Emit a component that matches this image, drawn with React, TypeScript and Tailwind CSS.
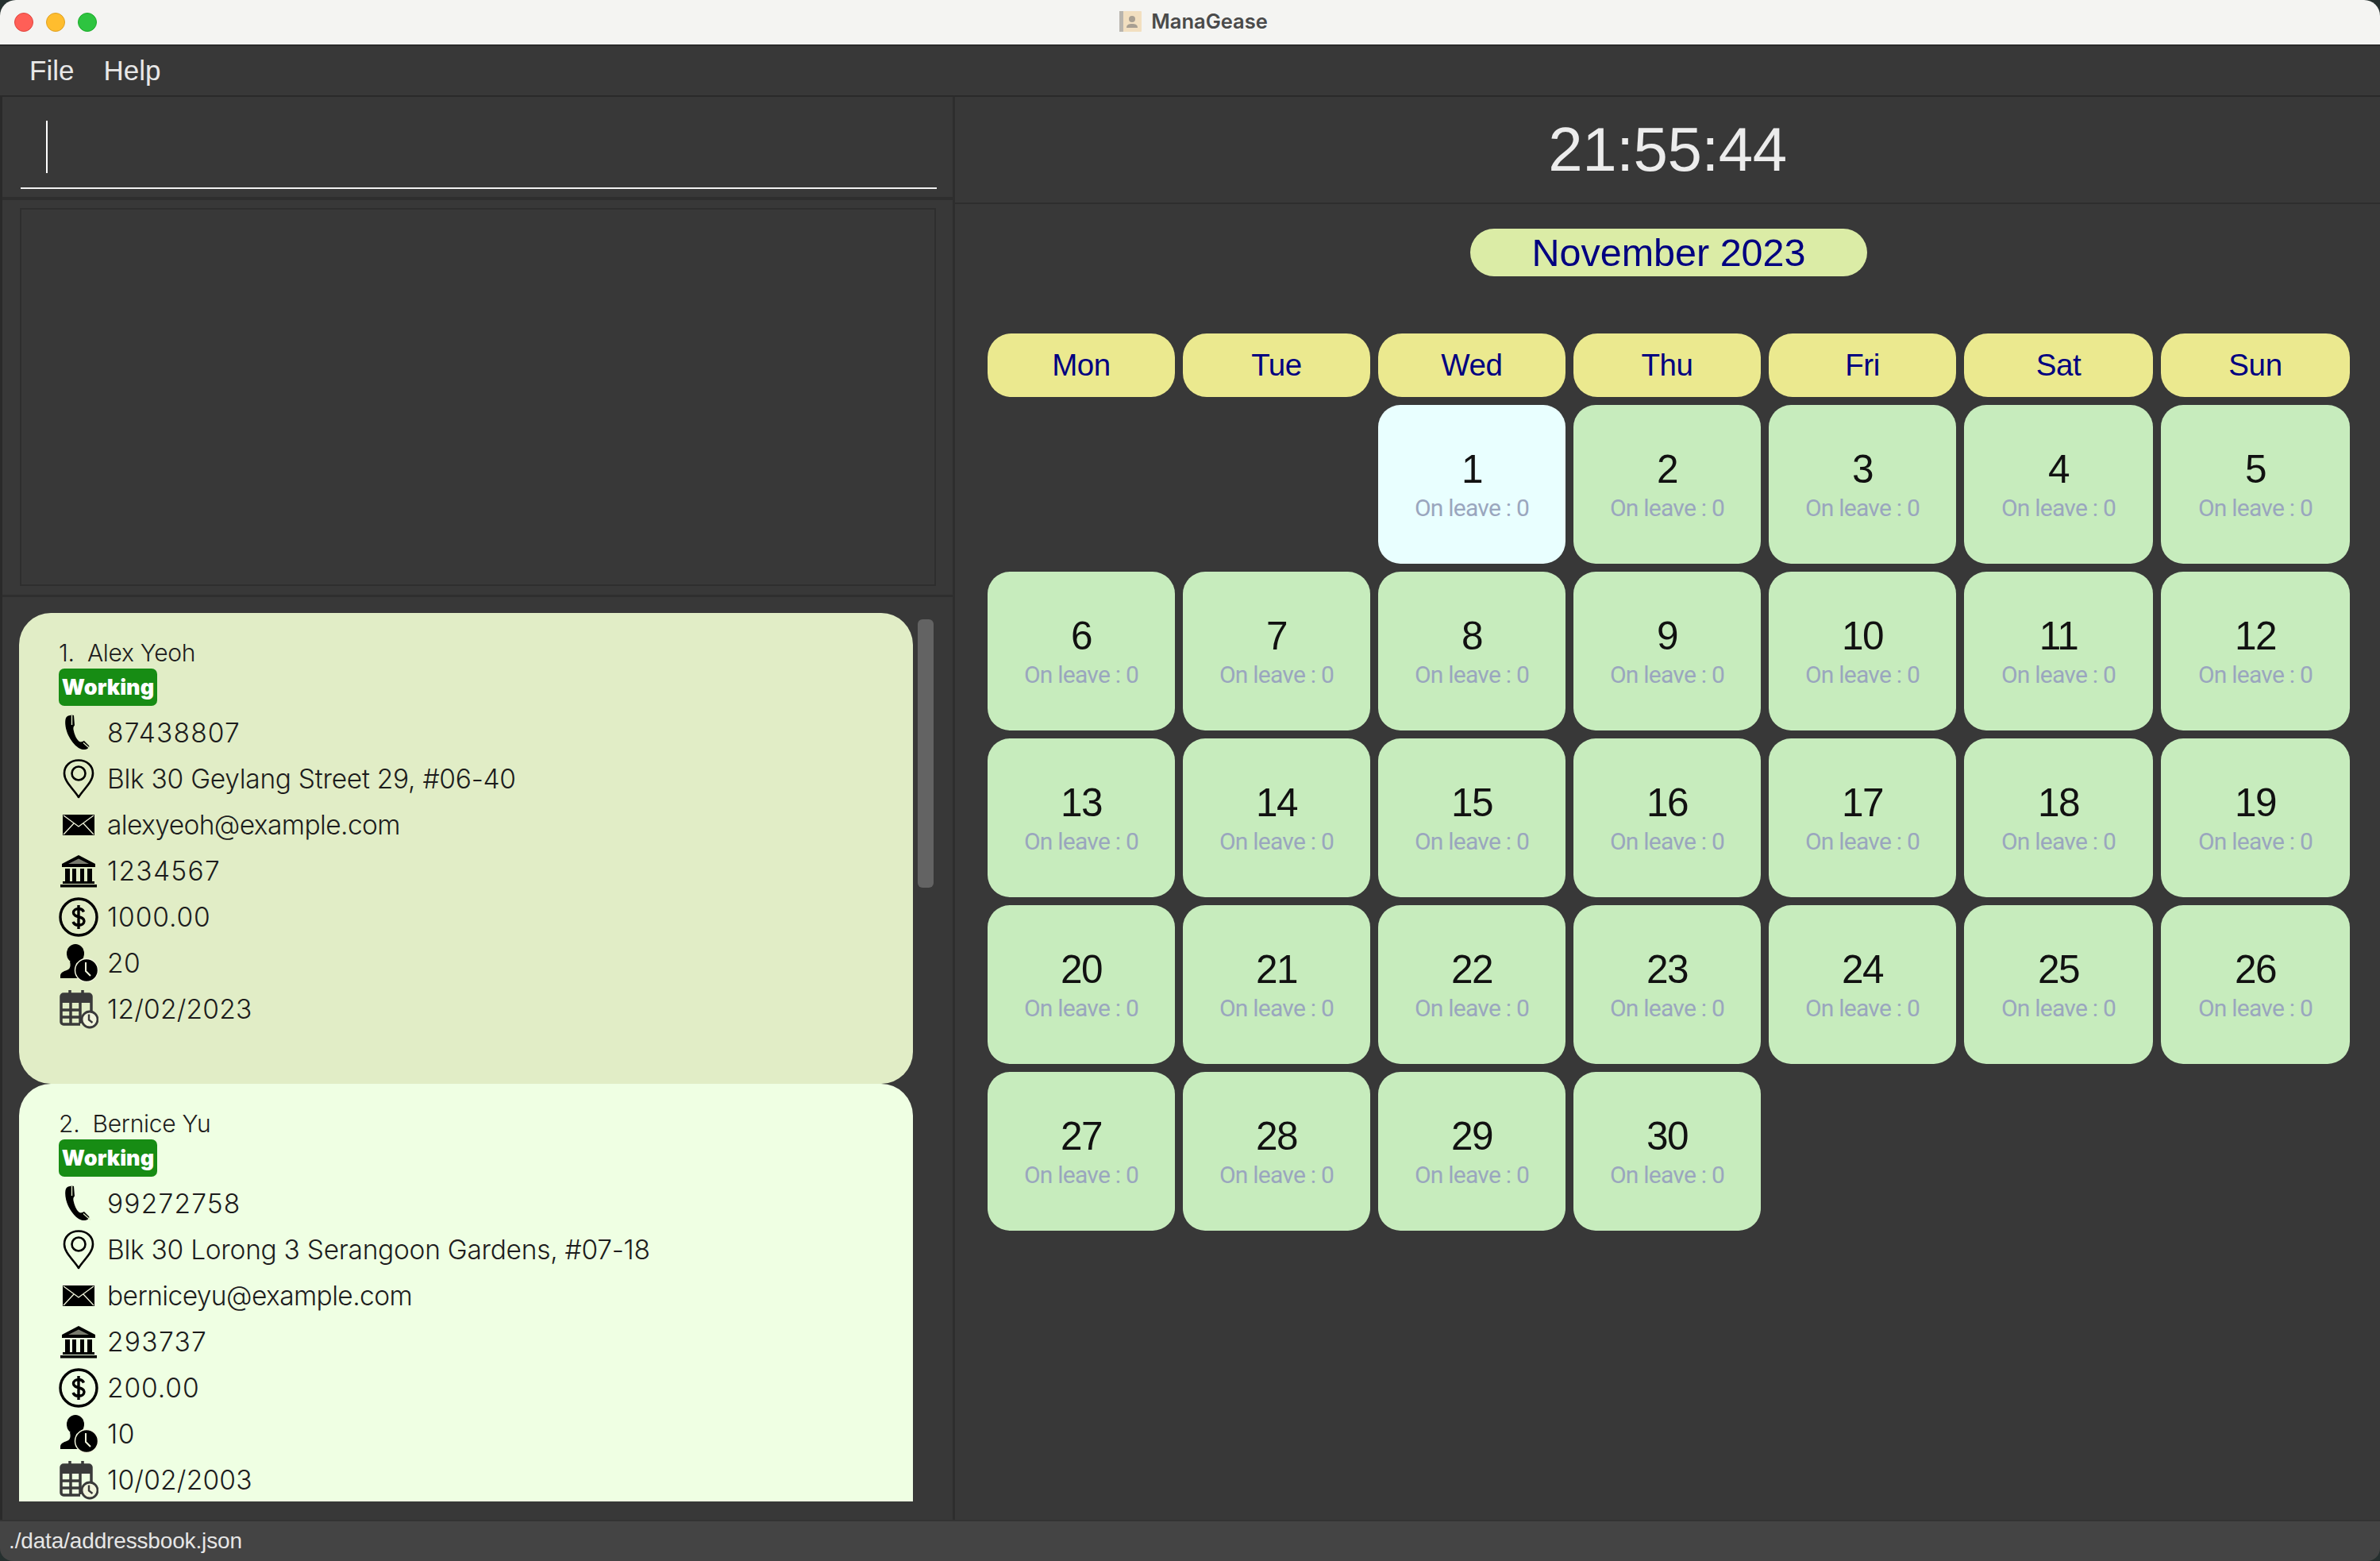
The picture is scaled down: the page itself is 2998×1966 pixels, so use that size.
const employees = [
  {
    id: 1,
    name: "Alex Yeoh",
    phone: "87438807",
    address: "Blk 30 Geylang Street 29, #06-40",
    email: "alexyeoh@example.com",
    bank: "1234567",
    salary: "1000.00",
    leave: "20",
    joined: "12/02/2023",
    color: "bg-[#e1edc6]",
  },
  {
    id: 2,
    name: "Bernice Yu",
    phone: "99272758",
    address: "Blk 30 Lorong 3 Serangoon Gardens, #07-18",
    email: "berniceyu@example.com",
    bank: "293737",
    salary: "200.00",
    leave: "10",
    joined: "10/02/2003",
    color: "bg-[#efffe3]",
  },
];

const weekDays = ["Mon", "Tue", "Wed", "Thu", "Fri", "Sat", "Sun"];
const monthDays = Array.from({ length: 30 }, (_, i) => i + 1);

const PhoneIcon = () => (
  <svg width="50" height="48" viewBox="0 0 50 48">
    <path
      d="M14 2c-3 .5-5 2-5.500 5-1 6 .5 13 3.500 20 3 6 7 12 13 16 3 2 8 3 11 1 2-1 3-3 2-4l-6-6c-2 1-4 2-6 1-3-2-6-8-7-13-1-3-1-6 1-7.500L19 2c-1-.5-3-.5-5 0z"
      fill="#000"
    />
    <path d="M16.500 2v12" stroke="#e1edc6" strokeWidth="1.400" />
    <path d="M31 36.500l9 8" stroke="#e1edc6" strokeWidth="1.400" />
  </svg>
);

const PinIcon = () => (
  <svg width="50" height="50" viewBox="0 0 50 50">
    <path
      d="M25 48 C19 38 7 29 7 18 C7 8 15 1.500 25 1.500 C35 1.500 43 8 43 18 C43 29 31 38 25 48 Z"
      fill="none"
      stroke="#000"
      strokeWidth="2.600"
      strokeLinejoin="round"
    />
    <circle cx="25" cy="18" r="8.500" fill="none" stroke="#000" strokeWidth="2.600" />
  </svg>
);

const MailIcon = () => (
  <svg width="50" height="28" viewBox="0 0 50 28">
    <rect x="5" y="1" width="40" height="26" fill="#000" />
    <path d="M6 2l19 14L44 2M6 26l13-14M44 26L31 12" fill="none" stroke="#f1f5dc" strokeWidth="1.300" />
  </svg>
);

const BankIcon = () => (
  <svg width="50" height="42" viewBox="0 0 50 42">
    <path d="M25 1L4 12v4h42v-4L25 1z" fill="#000" />
    <path d="M25 5.500L12 12h26L25 5.500z" fill="#f1f5dc" fillOpacity="0.500" />
    <path d="M8 18h6v16H8zM17 18h5v16h-5zM27 18h5v16h-5zM36 18h6v16h-6z" fill="#000" />
    <path d="M5 34h40v3H5zM2 38h46v3.500H2z" fill="#000" />
  </svg>
);

const DollarIcon = () => (
  <svg width="50" height="50" viewBox="0 0 50 50">
    <circle cx="25" cy="25" r="23" fill="none" stroke="#000" strokeWidth="3.400" />
    <path
      d="M31.500 18.500c-1-2.500-3.500-4-6.500-4-3.500 0-6.500 2-6.500 5 0 7 13.500 3.500 13.500 10.500 0 3.200-3 5.200-7 5.200-3.500 0-6-1.700-7-4.200M25 10v30"
      fill="none"
      stroke="#000"
      strokeWidth="3.400"
    />
  </svg>
);

const LeaveIcon = () => (
  <svg width="50" height="48" viewBox="0 0 50 48">
    <ellipse cx="21" cy="12" rx="11" ry="12" fill="#000" />
    <path d="M14 22c1 4 1 8-2 10-4 2-10 3-10 8v3h26v-10c-4-3-6-6-6-11z" fill="#000" />
    <circle cx="35" cy="33" r="14.500" fill="#000" stroke="#f1f5dc" strokeWidth="1.500" />
    <path d="M34 23v11l6 6" fill="none" stroke="#f1f5dc" strokeWidth="2" />
  </svg>
);

const JoinedIcon = () => (
  <svg width="50" height="50" viewBox="0 0 50 50">
    <path
      d="M3 9a3 3 0 0 1 3-3h32a3 3 0 0 1 3 3v23M27 44H6a3 3 0 0 1-3-3V9"
      fill="none"
      stroke="#3a3a3a"
      strokeWidth="3.500"
    />
    <path d="M3 7h38v10H3z" fill="#3a3a3a" />
    <path
      d="M14 1v8M30 1v8M3 26h24M3 35h24M15 17v26M27 17v26"
      fill="none"
      stroke="#3a3a3a"
      strokeWidth="3.500"
    />
    <circle cx="39" cy="38" r="10" fill="#f1f5dc" stroke="#3a3a3a" strokeWidth="2.800" />
    <path d="M38 31.500v7l4.500 3.500" fill="none" stroke="#3a3a3a" strokeWidth="2.400" />
  </svg>
);

const AddressBookIcon = () => (
  <svg width="28" height="26" viewBox="0 0 28 26">
    <rect x="0" y="0" width="28" height="26" rx="1" fill="#f2dfc0" />
    <rect x="0" y="0" width="5" height="26" fill="#b9b5ae" />
    <circle cx="16" cy="10" r="4" fill="#a89f92" />
    <path d="M9 21c0-4 3-5 7-5s7 1 7 5z" fill="#a89f92" />
  </svg>
);

const InfoRow = ({
  icon,
  text,
  tracking = "",
}: {
  icon: React.ReactNode;
  text: string;
  tracking?: string;
}) => (
  <div className="flex h-[58px] items-center">
    <div className="flex w-[50px] shrink-0 justify-center">{icon}</div>
    <span className={`mb-[1px] ml-[11px] whitespace-nowrap text-[33.500px] font-[350] leading-[40px] text-[#1c1c1c] ${tracking}`}>
      {text}
    </span>
  </div>
);

const EmployeeCard = ({ employee }: { employee: (typeof employees)[number] }) => (
  <div
    className={`flex h-[593px] w-[1126px] shrink-0 flex-col rounded-[40px] pl-[50px] pt-[30px] font-['Inter',sans-serif] ${employee.color}`}
  >
    <div className="flex h-[40px] items-center whitespace-pre text-[30px] font-[350] tracking-[-0.300px] text-[#1c1c1c]">
      {employee.id}.{"  "}
      {employee.name}
    </div>
    <div className="flex h-[47px] w-[124px] items-center justify-center rounded-[7px] bg-[#178c14] pt-[2px] text-[27px] font-black text-white">
      Working
    </div>
    <div className="mt-[5px] flex flex-col">
      <InfoRow icon={<PhoneIcon />} text={employee.phone} tracking="tracking-[1.200px]" />
      <InfoRow icon={<PinIcon />} text={employee.address} tracking="tracking-[-0.280px]" />
      <InfoRow icon={<MailIcon />} text={employee.email} tracking="tracking-[-0.600px]" />
      <InfoRow icon={<BankIcon />} text={employee.bank} tracking="tracking-[1.300px]" />
      <InfoRow icon={<DollarIcon />} text={employee.salary} tracking="tracking-[0.900px]" />
      <InfoRow icon={<LeaveIcon />} text={employee.leave} tracking="tracking-[0.500px]" />
      <InfoRow icon={<JoinedIcon />} text={employee.joined} tracking="tracking-[0.200px]" />
    </div>
  </div>
);

const DayCell = ({ day }: { day: number }) => (
  <div
    className={`flex h-[200px] flex-col items-center rounded-[28px] pt-[56px] ${
      day === 1 ? "bg-[#e9ffff]" : "bg-[#c7ecbd]"
    }`}
  >
    <span className="text-[49.500px] leading-[50px] tracking-[-1.500px] text-[#111]">{day}</span>
    <span className="mt-[9px] font-['Roboto',sans-serif] text-[30px] leading-[30px] tracking-[-0.750px] text-[#9aa6be]">
      On leave : 0
    </span>
  </div>
);

const App = () => {
  return (
    <div className="flex h-[1966px] w-[2998px] flex-col overflow-hidden bg-[#26302f] font-['Liberation_Sans',sans-serif]">
      <div className="flex h-[58px] shrink-0 items-center rounded-t-[20px] border-b-2 border-[#2a2a2a] bg-[#f4f4f2]">
        <div className="flex flex-1 gap-[16px] pl-[18px]">
          <div className="h-[24px] w-[24px] rounded-full border border-[#e0443e] bg-[#ff5f57]" />
          <div className="h-[24px] w-[24px] rounded-full border border-[#dea123] bg-[#ffbd2e]" />
          <div className="h-[24px] w-[24px] rounded-full border border-[#1aab29] bg-[#2ec440]" />
        </div>
        <div className="mb-[2px] mr-[9px] flex items-center gap-[12px]">
          <AddressBookIcon />
          <span className="font-['Inter',sans-serif] text-[25.500px] font-semibold text-[#4a4a4a]">ManaGease</span>
        </div>
        <div className="flex-1" />
      </div>

      <div className="flex h-[64px] shrink-0 items-center gap-[37px] border-b-2 border-[#2a2a2a] bg-[#383838] pl-[37px] text-[35px] text-[#e8e8e8]">
        <span>File</span>
        <span>Help</span>
      </div>

      <div className="flex min-h-0 flex-1 border-l-[3px] border-[#2a2a2a] bg-[#383838]">
        <div className="flex w-[1197px] shrink-0 flex-col">
          <div className="flex h-[126px] shrink-0 flex-col px-[23px] pt-[30px]">
            <div className="ml-[32px] h-[66px] w-[2px] bg-white" />
            <div className="mt-[18px] h-[2px] w-[1154px] bg-[#f2f2f2]" />
          </div>
          <div className="h-[4px] shrink-0 bg-[#2e2e2e]" />
          <div className="flex h-[497px] shrink-0 pb-[11px] pl-[22px] pr-[21px] pt-[10px]">
            <div className="w-full border-2 border-[#2e2e2e]" />
          </div>
          <div className="h-[3px] shrink-0 bg-[#2e2e2e]" />
          <div className="relative flex min-h-0 flex-1 pb-[23px] pl-[21px] pt-[20px]">
            <div className="flex min-h-0 flex-1 flex-col overflow-hidden">
              {employees.map((employee) => (
                <EmployeeCard key={employee.id} employee={employee} />
              ))}
            </div>
            <div className="absolute left-[1153px] top-[28px] h-[338px] w-[20px] rounded-[6px] bg-[#636363]" />
          </div>
        </div>

        <div className="flex min-w-0 flex-1 flex-col border-l-[3px] border-[#2e2e2e]">
          <div className="flex h-[135px] shrink-0 items-center justify-center border-b-2 border-[#2e2e2e] text-[78px] tracking-[-0.400px] text-[#ececec]">
            21:55:44
          </div>
          <div className="flex flex-col pl-[41px] pt-[31px]">
            <div className="ml-[608px] flex h-[60px] w-[500px] items-center justify-center rounded-[30px] bg-[#dbeca6] text-[48.500px] text-[#000080]">
              November 2023
            </div>
            <div className="mt-[72px] grid grid-cols-[repeat(5,236px)_238px_238px] gap-x-[10px] gap-y-[10px]">
              {weekDays.map((day) => (
                <div
                  key={day}
                  className="flex h-[80px] items-center justify-center rounded-[30px] bg-[#ebe98f] text-[38.500px] tracking-[-0.400px] text-[#000080]"
                >
                  {day}
                </div>
              ))}
              <div />
              <div />
              {monthDays.map((day) => (
                <DayCell key={day} day={day} />
              ))}
            </div>
          </div>
        </div>
      </div>

      <div className="flex h-[52px] shrink-0 items-center rounded-b-[16px] border-t-2 border-[#333] bg-[#444444] pl-[11px] text-[28px] tracking-[-0.150px] text-[#e6e6e6]">
        ./data/addressbook.json
      </div>
    </div>
  );
};

export default App;
